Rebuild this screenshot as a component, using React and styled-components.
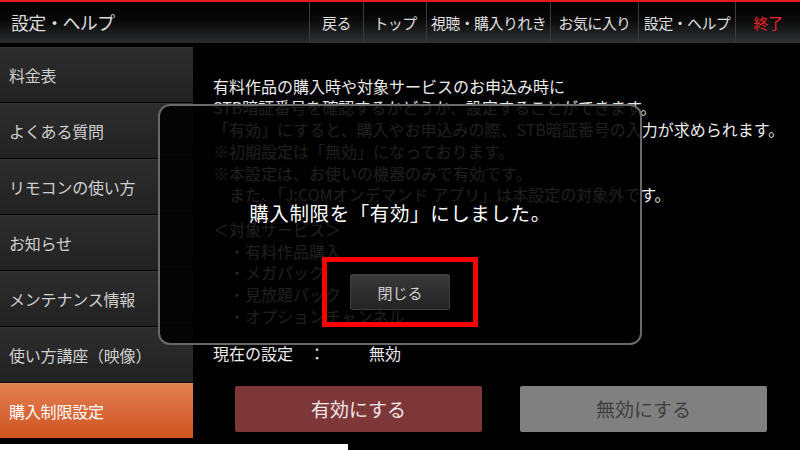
import React from "react";
import styled, { createGlobalStyle } from "styled-components";

const GlobalStyle = createGlobalStyle`
  html, body {
    margin: 0;
    padding: 0;
    background: #000;
  }
  body {
    font-family: "Noto Sans CJK JP", "Noto Sans", sans-serif;
  }
`;

const Page = styled.div`
  position: relative;
  width: 800px;
  height: 450px;
  overflow: hidden;
  background: #000;
  display: flex;
  flex-direction: column;
`;

const TopLine = styled.div`
  height: 2px;
  background: #e3191f;
`;

const Header = styled.header`
  height: 41px;
  display: flex;
  align-items: stretch;
  background: linear-gradient(#000 0%, #080808 45%, #2a2c2e 100%);
`;

const Title = styled.h1`
  flex: 1;
  margin: 0;
  padding-left: 11px;
  display: flex;
  align-items: center;
  font-size: 18px;
  font-weight: normal;
  color: #dcdcdc;
  letter-spacing: -0.8px;
`;

const NavButton = styled.div`
  width: ${(p) => p.$w}px;
  display: flex;
  align-items: center;
  justify-content: center;
  border-left: 1px solid #3c3c3c;
  font-size: 15px;
  letter-spacing: -0.6px;
  color: ${(p) => (p.$danger ? "#ec2525" : "#dedede")};
  background: linear-gradient(#000 0%, #0a0a0a 45%, #303234 100%);
`;

const Main = styled.div`
  margin-top: 4px;
  height: 397px;
  display: flex;
`;

const Sidebar = styled.nav`
  width: 193px;
  display: flex;
  flex-direction: column;
  gap: 1px;
`;

const SideItem = styled.div`
  height: 54px;
  display: flex;
  align-items: center;
  padding-left: 9px;
  font-size: 16px;
  letter-spacing: -0.2px;
  color: ${(p) => (p.$active ? "#fff" : "#cfcfcf")};
  background: ${(p) =>
    p.$active
      ? "linear-gradient(#e0804f 0%, #d9683a 50%, #cf5420 100%)"
      : "linear-gradient(#2d2d2d 0%, #262626 60%, #222 100%)"};
  border-top: 1px solid ${(p) => (p.$active ? "#e68c60" : "#353535")};
`;

const Content = styled.section`
  flex: 1;
  padding: 29px 0 0 20px;
  display: flex;
  flex-direction: column;
  color: #ececec;
  font-size: 16px;
  line-height: 21.7px;
  letter-spacing: 0;
`;

const Paragraph = styled.div`
  margin-bottom: ${(p) => p.$gap || 0}px;
  white-space: nowrap;
`;

const Line = styled.div`
  padding-left: ${(p) => p.$indent || 0}px;
`;

const CurrentRow = styled.div`
  display: flex;
  align-items: center;
`;

const CurrentLabel = styled.span`
  width: 96px;
`;

const Colon = styled.span`
  width: 14px;
  text-align: center;
`;

const CurrentValue = styled.span`
  margin-left: 46px;
`;

const ButtonRow = styled.div`
  margin-top: 21px;
  padding-left: 22px;
  display: flex;
  gap: 38px;
`;

const ActionButton = styled.div`
  width: 247px;
  height: 46px;
  border-radius: 2px;
  display: flex;
  align-items: center;
  justify-content: center;
  font-size: 19px;
  letter-spacing: 0;
  color: ${(p) => (p.$primary ? "#f0e6e6" : "#3e3e3e")};
  background: ${(p) => (p.$primary ? "#7e3738" : "#808080")};
`;

const BottomStrip = styled.div`
  margin-top: 3px;
  width: 348px;
  height: 6px;
  background: #fff;
`;

const Dialog = styled.div`
  position: absolute;
  left: 158px;
  top: 104px;
  width: 480px;
  height: 143px;
  padding-top: 94px;
  border: 2px solid #696969;
  border-radius: 12px;
  background: rgba(0, 0, 0, 0.87);
  display: flex;
  flex-direction: column;
  align-items: center;
`;

const DialogMessage = styled.div`
  font-size: 19.5px;
  line-height: 26px;
  color: #fff;
  letter-spacing: 0.6px;
`;

const Highlight = styled.div`
  margin-top: 31px;
  width: 146px;
  height: 60px;
  border: 5px solid #ff0000;
  display: flex;
  align-items: center;
  justify-content: center;
`;

const CloseButton = styled.div`
  width: 100px;
  height: 36px;
  border-radius: 2px;
  box-sizing: border-box;
  border: 1px solid #3f3f3f;
  background: linear-gradient(#3a3a3a 0%, #2c2c2c 55%, #242424 100%);
  display: flex;
  align-items: center;
  justify-content: center;
  font-size: 15px;
  color: #cfcfcf;
`;

const navItems = [
  { label: "戻る", w: 53 },
  { label: "トップ", w: 62 },
  { label: "視聴・購入りれき", w: 123 },
  { label: "お気に入り", w: 87 },
  { label: "設定・ヘルプ", w: 96 },
  { label: "終了", w: 64, danger: true },
];

const menuItems = [
  "料金表",
  "よくある質問",
  "リモコンの使い方",
  "お知らせ",
  "メンテナンス情報",
  "使い方講座（映像）",
  "購入制限設定",
];

const App = () => {
  return (
    <Page>
      <GlobalStyle />
      <TopLine />
      <Header>
        <Title>設定・ヘルプ</Title>
        {navItems.map((item) => (
          <NavButton key={item.label} $w={item.w} $danger={item.danger}>
            {item.label}
          </NavButton>
        ))}
      </Header>
      <Main>
        <Sidebar>
          {menuItems.map((item) => (
            <SideItem key={item} $active={item === "購入制限設定"}>
              {item}
            </SideItem>
          ))}
        </Sidebar>
        <Content>
          <Paragraph $gap={13}>
            <Line>有料作品の購入時や対象サービスのお申込み時に</Line>
            <Line>STB暗証番号を確認するかどうか、設定することができます。</Line>
            <Line>「有効」にすると、購入やお申込みの際、STB暗証番号の入力が求められます。</Line>
            <Line>※初期設定は「無効」になっております。</Line>
            <Line>※本設定は、お使いの機器のみで有効です。</Line>
            <Line $indent={16}>また、「J:COMオンデマンド アプリ」は本設定の対象外です。</Line>
          </Paragraph>
          <Paragraph $gap={16}>
            <Line>＜対象サービス＞</Line>
            <Line $indent={16}>・有料作品購入</Line>
            <Line $indent={16}>・メガパック</Line>
            <Line $indent={16}>・見放題パック</Line>
            <Line $indent={16}>・オプションチャンネル</Line>
          </Paragraph>
          <CurrentRow>
            <CurrentLabel>現在の設定</CurrentLabel>
            <Colon>：</Colon>
            <CurrentValue>無効</CurrentValue>
          </CurrentRow>
          <ButtonRow>
            <ActionButton $primary>有効にする</ActionButton>
            <ActionButton>無効にする</ActionButton>
          </ButtonRow>
        </Content>
      </Main>
      <BottomStrip />
      <Dialog>
        <DialogMessage>購入制限を「有効」にしました。</DialogMessage>
        <Highlight>
          <CloseButton>閉じる</CloseButton>
        </Highlight>
      </Dialog>
    </Page>
  );
};

export default App;
